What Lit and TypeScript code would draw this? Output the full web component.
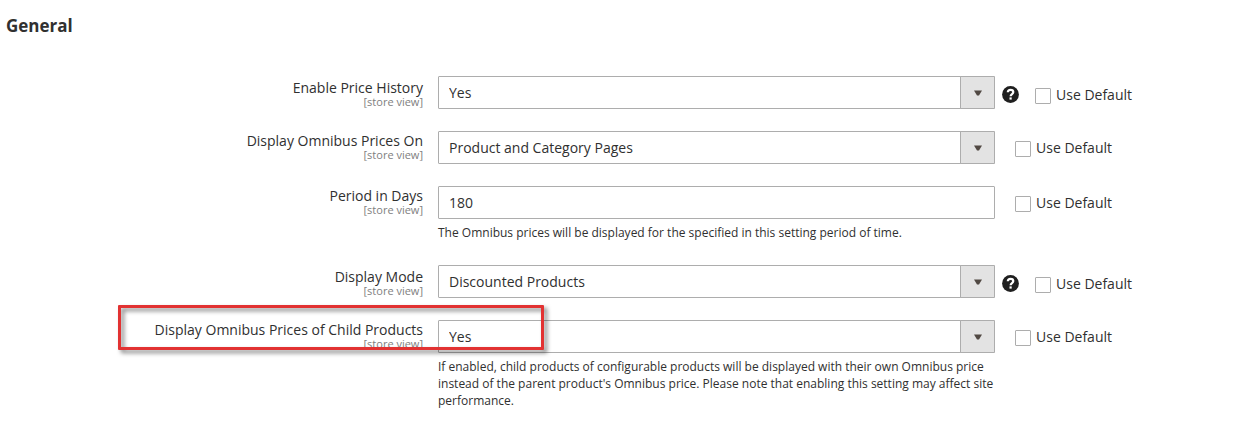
import { LitElement, html, css, nothing } from "lit";
import { customElement, property } from "lit/decorators.js";
import { classMap } from "lit/directives/class-map.js";

interface Field {
  id: string;
  label: string;
  kind: "select" | "text";
  value: string;
  options?: string[];
  hint?: boolean;
  note?: string;
  marked?: boolean;
}

const FIELDS: Field[] = [
  { id: "enable", label: "Enable Price History", kind: "select", value: "Yes", options: ["Yes", "No"], hint: true },
  {
    id: "display-on",
    label: "Display Omnibus Prices On",
    kind: "select",
    value: "Product and Category Pages",
    options: ["Product and Category Pages", "Product Pages"],
  },
  {
    id: "period",
    label: "Period in Days",
    kind: "text",
    value: "180",
    note: "The Omnibus prices will be displayed for the specified in this setting period of time.",
  },
  {
    id: "mode",
    label: "Display Mode",
    kind: "select",
    value: "Discounted Products",
    options: ["Discounted Products", "All Products"],
    hint: true,
  },
  {
    id: "child",
    label: "Display Omnibus Prices of Child Products",
    kind: "select",
    value: "Yes",
    options: ["Yes", "No"],
    note: "If enabled, child products of configurable products will be displayed with their own Omnibus price instead of the parent product's Omnibus price. Please note that enabling this setting may affect site performance.",
    marked: true,
  },
];

@customElement("config-field")
export class ConfigField extends LitElement {
  @property({ attribute: false }) field!: Field;

  static styles = css`
    :host {
      display: block;
    }
    .row {
      position: relative;
      display: grid;
      grid-template-columns: minmax(0, 438fr) minmax(0, 557fr) minmax(0, 255fr);
      align-items: start;
    }
    .name {
      display: flex;
      flex-direction: column;
      align-items: flex-end;
      padding-right: 15px;
      text-align: right;
    }
    .label {
      line-height: 20px;
    }
    .scope {
      font-size: 11px;
      line-height: 8px;
      color: #808080;
    }
    .control {
      position: relative;
    }
    .box {
      display: block;
      box-sizing: border-box;
      width: 100%;
      height: 33px;
      margin: 0;
      padding: 0 10px;
      border: 1px solid #adadad;
      border-radius: 1px;
      background: #fff;
      color: #303030;
      font: inherit;
      appearance: none;
    }
    select.box {
      padding: 0 44px 0 10px;
    }
    .arrow {
      position: absolute;
      top: 0;
      right: 0;
      box-sizing: border-box;
      width: 35px;
      height: 33px;
      border: 1px solid #adadad;
      border-radius: 0 1px 1px 0;
      background: #e3e3e3;
      pointer-events: none;
    }
    .arrow svg {
      display: block;
    }
    .note {
      margin: 5px 0 2px;
      font-size: 12px;
      line-height: 17px;
    }
    .extra {
      display: flex;
      align-items: flex-start;
      padding-left: 20px;
    }
    .hinted .name {
      padding-top: 2px;
    }
    .hinted .extra {
      padding-left: 7px;
      gap: 16px;
    }
    .hint {
      flex: none;
      width: 17px;
      height: 17px;
      margin: 10px 0 0;
      padding: 0;
      border: 0;
      background: none;
    }
    .hint svg {
      display: block;
    }
    .default {
      display: flex;
      gap: 5px;
      padding-top: 7px;
      line-height: 20px;
      white-space: nowrap;
    }
    .hinted .default {
      padding-top: 9px;
    }
    .check {
      flex: none;
      box-sizing: border-box;
      width: 16px;
      height: 16px;
      margin: 3px 0 0;
      border: 1px solid #adadad;
      border-radius: 1px;
      background: #fff;
      appearance: none;
    }
    .check:checked {
      background: #514943;
    }
    .marker {
      position: absolute;
      top: -15px;
      left: 118px;
      z-index: 1;
      box-sizing: border-box;
      width: 426px;
      height: 45px;
      border: 3px solid #e23232;
      border-radius: 1px;
      filter: drop-shadow(3px 3px 2px rgba(0, 0, 0, 0.5));
      pointer-events: none;
    }
  `;

  private renderControl(f: Field) {
    if (f.kind === "text") {
      return html`<input class="box" id=${f.id} type="text" .value=${f.value} />`;
    }
    return html`
      <select class="box" id=${f.id}>
        ${f.options?.map((o) => html`<option ?selected=${o === f.value}>${o}</option>`)}
      </select>
      <span class="arrow" aria-hidden="true">
        <svg width="33" height="31" viewBox="0 0 33 31"><path d="M13 13.500h8l-3 5h-2z" fill="#514943" /></svg>
      </span>
    `;
  }

  render() {
    const f = this.field;
    return html`
      <div class=${classMap({ row: true, hinted: !!f.hint })}>
        <div class="name">
          <label class="label" for=${f.id}>${f.label}</label>
          <span class="scope">[store view]</span>
        </div>
        <div class="control">
          ${this.renderControl(f)} ${f.note ? html`<p class="note">${f.note}</p>` : nothing}
        </div>
        <div class="extra">
          ${f.hint
            ? html`<button class="hint" type="button" aria-label="Help">
                <svg width="17" height="17" viewBox="0 0 17 17">
                  <circle cx="8.500" cy="8.500" r="8.400" fill="#1f1f1f" />
                  <path
                    d="M5.800 6.300C5.900 4.500 7 3.800 8.500 3.800c1.700 0 2.800.8 2.800 2.300 0 2-2.700 1.900-2.700 4.200"
                    fill="none"
                    stroke="#fff"
                    stroke-width="2.200"
                  />
                  <rect x="7.500" y="11.400" width="2.200" height="2.200" fill="#fff" />
                </svg>
              </button>`
            : nothing}
          <label class="default" for="${f.id}-default">
            <input class="check" type="checkbox" id="${f.id}-default" />
            <span>Use Default</span>
          </label>
        </div>
        ${f.marked ? html`<div class="marker"></div>` : nothing}
      </div>
    `;
  }
}

@customElement("app-root")
export class AppRoot extends LitElement {
  static styles = css`
    :host {
      display: block;
      padding: 14px 0 16px;
      background: #fff;
      color: #303030;
      font-family: "Open Sans", "Noto Sans", sans-serif;
      font-size: 14px;
    }
    .title {
      margin: 0 0 38px;
      padding-left: 6px;
      font-size: 17px;
      font-weight: 700;
      line-height: 24px;
    }
    .fields {
      display: flex;
      flex-direction: column;
      gap: 22px;
    }
  `;

  render() {
    return html`
      <h2 class="title">General</h2>
      <form class="fields">
        ${FIELDS.map((f) => html`<config-field .field=${f}></config-field>`)}
      </form>
    `;
  }
}
